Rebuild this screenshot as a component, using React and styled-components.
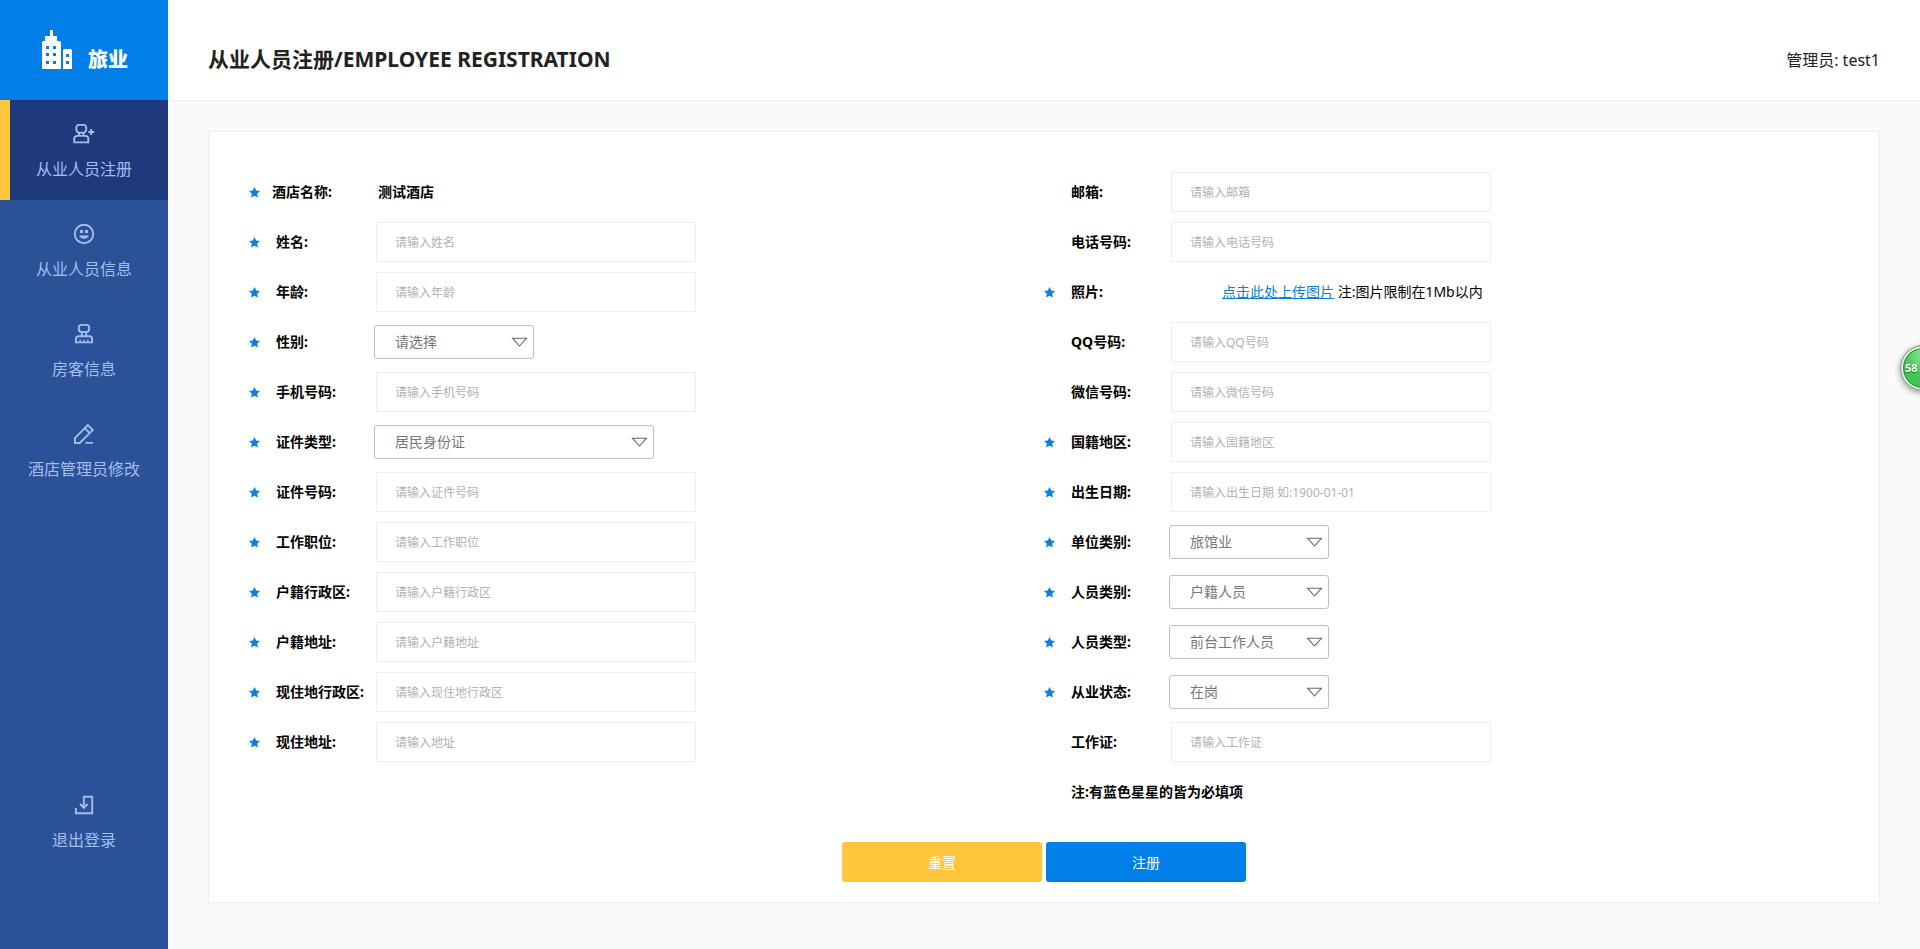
// src/pages/EmployeeRegister.jsx
import React, { useState } from 'react';
import styled, { createGlobalStyle, css } from 'styled-components';

const GlobalStyle = createGlobalStyle`
  * {
    box-sizing: border-box;
  }

  body {
    margin: 0;
    background-color: #fafafa;
    color: #000000;
    font-family: 'Noto Sans', 'Noto Sans CJK SC', sans-serif;
    font-size: 14px;
  }

  button, input, select {
    font-family: inherit;
  }
`;

// ==================== Layout ====================
const Page = styled.div`
  display: flex;
  min-height: 100vh;
`;

const Sidebar = styled.aside`
  flex: 0 0 168px;
  display: flex;
  flex-direction: column;
  background-color: #2b5299;
`;

const Logo = styled.div`
  display: flex;
  align-items: flex-end;
  justify-content: center;
  gap: 16px;
  height: 100px;
  padding: 0 0 30px 2px;
  background-color: #007fe9;
  color: #ffffff;
  font-size: 20px;
  font-weight: 900;
  line-height: 20px;

  svg {
    display: block;
  }
`;

const Nav = styled.nav`
  flex: 1;
  display: flex;
  flex-direction: column;
  padding-bottom: 78px;
`;

const NavItem = styled.a`
  display: flex;
  flex-direction: column;
  align-items: center;
  gap: 11px;
  height: 100px;
  padding-top: 22px;
  color: #a6bdec;
  font-size: 16px;
  line-height: 24px;
  text-decoration: none;

  ${(props) => props.$active && css`
    background-color: #1f3a7c;
    box-shadow: inset 10px 0 0 #ffc53d;
  `}

  ${(props) => props.$last && css`
    margin-top: auto;
  `}
`;

const Main = styled.main`
  flex: 1;
  min-width: 0;
`;

const Header = styled.header`
  display: flex;
  align-items: center;
  justify-content: space-between;
  height: 101px;
  padding: 18px 40px 0;
  border-bottom: 1px solid #eeeeee;
  background-color: #ffffff;
  color: #222222;
`;

const Title = styled.h1`
  margin: 0;
  font-size: 21px;
  font-weight: 700;
  line-height: 30px;
`;

const Admin = styled.span`
  font-size: 16px;
`;

// ==================== Form ====================
const Card = styled.form`
  margin: 30px 40px;
  padding: 35px 40px 20px;
  border: 1px solid #eeeeee;
  background-color: #ffffff;
`;

const Columns = styled.div`
  display: grid;
  grid-template-columns: 1fr 1fr;
`;

const Row = styled.div`
  display: grid;
  grid-template-columns: ${(props) => (props.$fixed ? '23px 106px 1fr' : '27px 98px 1fr')};
  align-items: center;
  height: 50px;
`;

const Label = styled.label`
  grid-column: 2;
  font-weight: 700;
  line-height: 20px;
  white-space: nowrap;
`;

const Control = styled.div`
  grid-column: 3;
`;

const HotelName = styled.output`
  font-weight: 700;
  line-height: 20px;
`;

const Note = styled.p`
  grid-column: 2 / -1;
  margin: 0;
  font-weight: 700;
  line-height: 20px;
`;

const TextInput = styled.input`
  display: block;
  width: 320px;
  height: 40px;
  margin-left: 2px;
  padding: 0 18px;
  border: 1px solid #eeeeee;
  background-color: #ffffff;
  font-size: 12px;
  outline: none;

  &:focus {
    border-color: #007fe9;
  }

  &::placeholder {
    color: #b2b2b2;
  }
`;

const SelectBox = styled.div`
  position: relative;
  width: ${(props) => (props.$wide ? '280px' : '160px')};

  svg {
    position: absolute;
    top: 12px;
    right: 6px;
    pointer-events: none;
  }
`;

const Select = styled.select`
  appearance: none;
  display: block;
  width: 100%;
  height: 34px;
  padding: 0 30px 2px 20px;
  border: 1px solid #bfbfbf;
  border-radius: 3px;
  background-color: #ffffff;
  color: #777777;
  font-size: 14px;
`;

const Upload = styled.div`
  padding-left: 53px;
  line-height: 20px;
  white-space: nowrap;

  a {
    color: #0a7fd6;
  }
`;

const Actions = styled.div`
  display: flex;
  justify-content: center;
  gap: 4px;
  margin-top: 25px;
`;

const Button = styled.button`
  width: 200px;
  height: 40px;
  border: none;
  border-radius: 3px;
  background-color: ${(props) => (props.$primary ? '#007fe9' : '#ffc53d')};
  color: #ffffff;
  font-size: 14px;
  cursor: pointer;
`;

const SpeedBall = styled.div`
  position: fixed;
  top: 345px;
  right: -26px;
  width: 46px;
  height: 46px;
  padding-left: 4px;
  border: 1px solid #8d9b90;
  border-radius: 50%;
  background: radial-gradient(circle at 50% 20%, #8be692 0, #43c954 45%, #35c149 100%);
  box-shadow: inset 0 0 0 2px #e4f7e6, inset 0 0 0 3px #2c8a3a, 0 2px 6px rgba(0, 0, 0, 0.4);
  color: #ffffff;
  font-size: 11px;
  font-weight: 700;
  line-height: 44px;
  text-shadow: 0 1px 1px #1d6b2a;
`;

// ==================== Icons ====================
const LineIcon = ({ children }) => (
  <svg width="24" height="24" viewBox="0 0 24 24" fill="none" stroke="currentColor" strokeWidth="1.9" aria-hidden="true">
    {children}
  </svg>
);

const UserAddIcon = () => (
  <LineIcon>
    <path d="M7 2.900h4.500A2.700 2.700 0 0 1 14.200 5.600v1.900a3.200 3.200 0 0 1-3.200 3.200H7.500a3.200 3.200 0 0 1-3.200-3.200V5.600A2.700 2.700 0 0 1 7 2.900z" />
    <path d="M7 10.700v3M11.500 10.700v3" />
    <path d="M5.200 13.900h8.100a3 3 0 0 1 3 3v3.500H2.200v-3.500a3 3 0 0 1 3-3z" />
    <path d="M19.200 7v6M16.200 10h6" />
  </LineIcon>
);

const SmileIcon = () => (
  <LineIcon>
    <circle cx="12" cy="12" r="9.200" />
    <path d="M8 8h3v3H8zM13 8h3v3h-3zM7 13.500h10c-.5 2-2.500 3.200-5 3.200s-4.500-1.200-5-3.200z" fill="currentColor" stroke="none" />
  </LineIcon>
);

const StampIcon = () => (
  <LineIcon>
    <path d="M9.500 2.900h5A2.800 2.800 0 0 1 17.200 5.700v1.300a3 3 0 0 1-2.900 3H9.700a3 3 0 0 1-2.900-3V5.700A2.800 2.800 0 0 1 9.500 2.900z" />
    <path d="M9.800 10v4M14.200 10v4" />
    <path d="M6.500 14.200h11a2.600 2.600 0 0 1 2.600 2.600v3.600H3.900v-3.600a2.600 2.600 0 0 1 2.600-2.600z" />
    <path d="M8.200 17.800v2M12 17.800v2M15.800 17.800v2" strokeWidth="1.400" />
  </LineIcon>
);

const PencilIcon = () => (
  <LineIcon>
    <path d="M2.900 21v-4.800L15.800 3.200l4.900 4.900L7.800 21z" />
    <path d="M12.800 6.200l4.900 4.900M13.500 20.900H21" />
  </LineIcon>
);

const LogoutIcon = () => (
  <LineIcon>
    <path d="M3.900 15v5.200h16.300V3.800h-8.400V15" />
    <path d="M8 11l3.800 3.800 3.800-3.800" />
  </LineIcon>
);

const BuildingIcon = () => (
  <svg width="30" height="40" viewBox="0 0 30 40" fill="#ffffff" fillRule="evenodd" aria-hidden="true">
    <path d="M8 0h3v6h4v5h3l1 1v27H0V12l1-1h2V6h5zM4 16v3h3v-3zM11 16v3h3v-3zM4 23v3h3v-3zM11 23v3h3v-3zM4 31v3h3v-3zM11 31v3h3v-3z" />
    <path d="M22 19h7l1 1v19h-9V20zM24 24v3h3v-3zM24 31v3h3v-3z" />
  </svg>
);

const StarIcon = () => (
  <svg width="11" height="11" viewBox="0 0 11 11" fill="#0a80e3" aria-hidden="true">
    <path d="M5.500 0l1.700 3.500 3.800.5-2.800 2.700.7 3.900-3.400-1.800-3.400 1.800.7-3.900L0 4l3.800-.5z" />
  </svg>
);

const ArrowIcon = () => (
  <svg width="17" height="10" viewBox="0 0 17 10" fill="none" stroke="#6b6b6b" strokeWidth="1.100" aria-hidden="true">
    <path d="M1.500 1.200h14L8.500 9z" />
  </svg>
);

// ==================== Data ====================
const menus = [
  { text: '从业人员注册', icon: UserAddIcon },
  { text: '从业人员信息', icon: SmileIcon },
  { text: '房客信息', icon: StampIcon },
  { text: '酒店管理员修改', icon: PencilIcon },
];

const leftFields = [
  { id: 'name', label: '姓名:', required: true, placeholder: '请输入姓名' },
  { id: 'age', label: '年龄:', required: true, placeholder: '请输入年龄' },
  { id: 'sex', label: '性别:', required: true, options: ['请选择', '男', '女'] },
  { id: 'mobile', label: '手机号码:', required: true, placeholder: '请输入手机号码' },
  { id: 'cardType', label: '证件类型:', required: true, wide: true, options: ['居民身份证', '护照'] },
  { id: 'cardNo', label: '证件号码:', required: true, placeholder: '请输入证件号码' },
  { id: 'job', label: '工作职位:', required: true, placeholder: '请输入工作职位' },
  { id: 'region', label: '户籍行政区:', required: true, placeholder: '请输入户籍行政区' },
  { id: 'address', label: '户籍地址:', required: true, placeholder: '请输入户籍地址' },
  { id: 'liveRegion', label: '现住地行政区:', required: true, placeholder: '请输入现住地行政区' },
  { id: 'liveAddress', label: '现住地址:', required: true, placeholder: '请输入地址' },
];

const rightFields = [
  { id: 'email', label: '邮箱:', placeholder: '请输入邮箱' },
  { id: 'phone', label: '电话号码:', placeholder: '请输入电话号码' },
  { id: 'photo', label: '照片:', required: true, upload: true },
  { id: 'qq', label: 'QQ号码:', placeholder: '请输入QQ号码' },
  { id: 'wechat', label: '微信号码:', placeholder: '请输入微信号码' },
  { id: 'country', label: '国籍地区:', required: true, placeholder: '请输入国籍地区' },
  { id: 'birthday', label: '出生日期:', required: true, placeholder: '请输入出生日期 如:1900-01-01' },
  { id: 'unitType', label: '单位类别:', required: true, options: ['旅馆业'] },
  { id: 'personKind', label: '人员类别:', required: true, options: ['户籍人员', '流动人员'] },
  { id: 'personType', label: '人员类型:', required: true, options: ['前台工作人员', '其他'] },
  { id: 'status', label: '从业状态:', required: true, options: ['在岗', '离岗'] },
  { id: 'workCard', label: '工作证:', placeholder: '请输入工作证' },
];

const Field = ({ field, value, onChange }) => {
  const { id, label, required, placeholder, options, wide, upload } = field;
  const handleChange = (e) => onChange(id, e.target.value);

  return (
    <Row>
      {required && <StarIcon />}
      <Label htmlFor={id}>{label}</Label>
      <Control>
        {upload && (
          <Upload>
            <a id={id} href="#upload">点击此处上传图片</a> 注:图片限制在1Mb以内
          </Upload>
        )}
        {options && (
          <SelectBox $wide={wide}>
            <Select id={id} value={value || options[0]} onChange={handleChange}>
              {options.map((item) => <option key={item}>{item}</option>)}
            </Select>
            <ArrowIcon />
          </SelectBox>
        )}
        {placeholder && (
          <TextInput id={id} type="text" placeholder={placeholder} value={value || ''} onChange={handleChange} />
        )}
      </Control>
    </Row>
  );
};

// ==================== Main Component ====================
const App = () => {
  const [form, setForm] = useState({});

  const handleChange = (id, value) => {
    setForm((prev) => ({ ...prev, [id]: value }));
  };

  const renderField = (field) => (
    <Field key={field.id} field={field} value={form[field.id]} onChange={handleChange} />
  );

  return (
    <Page>
      <GlobalStyle />
      <Sidebar>
        <Logo>
          <BuildingIcon />
          旅业
        </Logo>
        <Nav>
          {menus.map(({ text, icon: Icon }, index) => (
            <NavItem key={text} href="#menu" $active={index === 0}>
              <Icon />
              {text}
            </NavItem>
          ))}
          <NavItem href="#logout" $last>
            <LogoutIcon />
            退出登录
          </NavItem>
        </Nav>
      </Sidebar>

      <Main>
        <Header>
          <Title>从业人员注册/EMPLOYEE REGISTRATION</Title>
          <Admin>管理员: test1</Admin>
        </Header>

        <Card onSubmit={(e) => e.preventDefault()}>
          <Columns>
            <div>
              <Row $fixed>
                <StarIcon />
                <Label htmlFor="hotel">酒店名称:</Label>
                <HotelName id="hotel">测试酒店</HotelName>
              </Row>
              {leftFields.map(renderField)}
            </div>
            <div>
              {rightFields.map(renderField)}
              <Row>
                <Note>注:有蓝色星星的皆为必填项</Note>
              </Row>
            </div>
          </Columns>

          <Actions>
            <Button type="button" onClick={() => setForm({})}>重置</Button>
            <Button type="submit" $primary>注册</Button>
          </Actions>
        </Card>
      </Main>

      <SpeedBall>58</SpeedBall>
    </Page>
  );
};

export default App;
